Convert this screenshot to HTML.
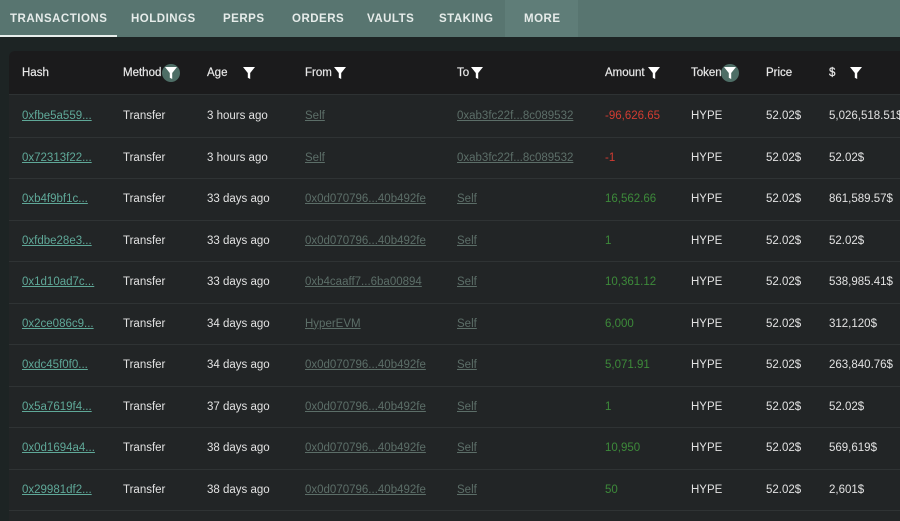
<!DOCTYPE html>
<html><head><style>
*{margin:0;padding:0;box-sizing:border-box}
body{width:900px;height:514px;overflow:hidden;background:#1d2424;font-family:"Liberation Sans",sans-serif;position:relative}
.tabs{position:absolute;left:0;top:0;width:900px;height:37px;background:#587570}
.tab{position:absolute;top:13px;font-size:11.5px;font-weight:bold;letter-spacing:0.5px;color:#e6ecea}
.more{position:absolute;left:505px;top:0;width:73px;height:37px;background:#5f7d78}
.ul{position:absolute;left:0;top:35px;width:117px;height:2px;background:#e8eeec}
.table{position:absolute;left:9px;top:51px;width:900px;height:470px;background:#222526;border-radius:6px 0 0 0;overflow:hidden}
.head{position:absolute;left:0;top:0;width:100%;height:44px;background:#1b1b1c;border-bottom:1px solid #2e3233}
.c{position:absolute;font-size:11.5px;color:#e2e2e2;white-space:nowrap}
.h{font-weight:600;color:#e8e8e8;-webkit-text-stroke:0.2px #e8e8e8;font-weight:normal}
.row{position:absolute;left:0;width:100%;height:41.5px;border-bottom:1px solid #2f3334}
a{color:#5fa898;text-decoration:underline}
.l{color:#5c6e68;text-decoration:underline}
.g{color:#3d8a3a}.r{color:#d23c32}
.f{position:absolute;width:18px;height:18px;border-radius:50%}
.f svg{position:absolute;left:3px;top:3px}
</style></head><body>
<div class="tabs">
<div class="more"></div>
<div class="tab" style="left:10px">TRANSACTIONS</div>
<div class="tab" style="left:131px">HOLDINGS</div>
<div class="tab" style="left:223px">PERPS</div>
<div class="tab" style="left:292px">ORDERS</div>
<div class="tab" style="left:367px">VAULTS</div>
<div class="tab" style="left:439px">STAKING</div>
<div class="tab" style="left:524px">MORE</div>
<div class="ul"></div>
</div>
<div class="table">
<div class="head">
<div class="c h" style="left:13px;top:16px">Hash</div>
<div class="c h" style="left:114px;top:16px">Method</div>
<div class="f" style="left:153px;top:13px;background:#4e6e66"><svg width="12" height="12" viewBox="0 0 10 10"><path d="M0 0H10L6 5V10L4 9V5Z" fill="#fff"/></svg></div>
<div class="c h" style="left:198px;top:16px">Age</div>
<div class="f" style="left:231px;top:13px"><svg width="12" height="12" viewBox="0 0 10 10"><path d="M0 0H10L6 5V10L4 9V5Z" fill="#fff"/></svg></div>
<div class="c h" style="left:296px;top:16px">From</div>
<div class="f" style="left:322px;top:13px"><svg width="12" height="12" viewBox="0 0 10 10"><path d="M0 0H10L6 5V10L4 9V5Z" fill="#fff"/></svg></div>
<div class="c h" style="left:448px;top:16px">To</div>
<div class="f" style="left:459px;top:13px"><svg width="12" height="12" viewBox="0 0 10 10"><path d="M0 0H10L6 5V10L4 9V5Z" fill="#fff"/></svg></div>
<div class="c h" style="left:596px;top:16px">Amount</div>
<div class="f" style="left:636px;top:13px"><svg width="12" height="12" viewBox="0 0 10 10"><path d="M0 0H10L6 5V10L4 9V5Z" fill="#fff"/></svg></div>
<div class="c h" style="left:682px;top:16px">Token</div>
<div class="f" style="left:712px;top:13px;background:#4e6e66"><svg width="12" height="12" viewBox="0 0 10 10"><path d="M0 0H10L6 5V10L4 9V5Z" fill="#fff"/></svg></div>
<div class="c h" style="left:757px;top:16px">Price</div>
<div class="c h" style="left:820px;top:16px">$</div>
<div class="f" style="left:838px;top:13px"><svg width="12" height="12" viewBox="0 0 10 10"><path d="M0 0H10L6 5V10L4 9V5Z" fill="#fff"/></svg></div>
</div>
</div>
<div style="position:absolute;left:9px;top:96px;width:900px">
<div class="row" style="top:0"><div class="c" style="left:13px;top:14px"><a>0xfbe5a559...</a></div><div class="c" style="left:114px;top:14px">Transfer</div><div class="c" style="left:198px;top:14px">3 hours ago</div><div class="c l" style="left:296px;top:14px">Self</div><div class="c l" style="left:448px;top:14px">0xab3fc22f...8c089532</div><div class="c r" style="left:596px;top:14px">-96,626.65</div><div class="c" style="left:682px;top:14px">HYPE</div><div class="c" style="left:757px;top:14px">52.02$</div><div class="c" style="left:820px;top:14px">5,026,518.51$</div></div>
<div class="row" style="top:41.5px"><div class="c" style="left:13px;top:14px"><a>0x72313f22...</a></div><div class="c" style="left:114px;top:14px">Transfer</div><div class="c" style="left:198px;top:14px">3 hours ago</div><div class="c l" style="left:296px;top:14px">Self</div><div class="c l" style="left:448px;top:14px">0xab3fc22f...8c089532</div><div class="c r" style="left:596px;top:14px">-1</div><div class="c" style="left:682px;top:14px">HYPE</div><div class="c" style="left:757px;top:14px">52.02$</div><div class="c" style="left:820px;top:14px">52.02$</div></div>
<div class="row" style="top:83px"><div class="c" style="left:13px;top:14px"><a>0xb4f9bf1c...</a></div><div class="c" style="left:114px;top:14px">Transfer</div><div class="c" style="left:198px;top:14px">33 days ago</div><div class="c l" style="left:296px;top:14px">0x0d070796...40b492fe</div><div class="c l" style="left:448px;top:14px">Self</div><div class="c g" style="left:596px;top:14px">16,562.66</div><div class="c" style="left:682px;top:14px">HYPE</div><div class="c" style="left:757px;top:14px">52.02$</div><div class="c" style="left:820px;top:14px">861,589.57$</div></div>
<div class="row" style="top:124.5px"><div class="c" style="left:13px;top:14px"><a>0xfdbe28e3...</a></div><div class="c" style="left:114px;top:14px">Transfer</div><div class="c" style="left:198px;top:14px">33 days ago</div><div class="c l" style="left:296px;top:14px">0x0d070796...40b492fe</div><div class="c l" style="left:448px;top:14px">Self</div><div class="c g" style="left:596px;top:14px">1</div><div class="c" style="left:682px;top:14px">HYPE</div><div class="c" style="left:757px;top:14px">52.02$</div><div class="c" style="left:820px;top:14px">52.02$</div></div>
<div class="row" style="top:166px"><div class="c" style="left:13px;top:14px"><a>0x1d10ad7c...</a></div><div class="c" style="left:114px;top:14px">Transfer</div><div class="c" style="left:198px;top:14px">33 days ago</div><div class="c l" style="left:296px;top:14px">0xb4caaff7...6ba00894</div><div class="c l" style="left:448px;top:14px">Self</div><div class="c g" style="left:596px;top:14px">10,361.12</div><div class="c" style="left:682px;top:14px">HYPE</div><div class="c" style="left:757px;top:14px">52.02$</div><div class="c" style="left:820px;top:14px">538,985.41$</div></div>
<div class="row" style="top:207.5px"><div class="c" style="left:13px;top:14px"><a>0x2ce086c9...</a></div><div class="c" style="left:114px;top:14px">Transfer</div><div class="c" style="left:198px;top:14px">34 days ago</div><div class="c l" style="left:296px;top:14px">HyperEVM</div><div class="c l" style="left:448px;top:14px">Self</div><div class="c g" style="left:596px;top:14px">6,000</div><div class="c" style="left:682px;top:14px">HYPE</div><div class="c" style="left:757px;top:14px">52.02$</div><div class="c" style="left:820px;top:14px">312,120$</div></div>
<div class="row" style="top:249px"><div class="c" style="left:13px;top:14px"><a>0xdc45f0f0...</a></div><div class="c" style="left:114px;top:14px">Transfer</div><div class="c" style="left:198px;top:14px">34 days ago</div><div class="c l" style="left:296px;top:14px">0x0d070796...40b492fe</div><div class="c l" style="left:448px;top:14px">Self</div><div class="c g" style="left:596px;top:14px">5,071.91</div><div class="c" style="left:682px;top:14px">HYPE</div><div class="c" style="left:757px;top:14px">52.02$</div><div class="c" style="left:820px;top:14px">263,840.76$</div></div>
<div class="row" style="top:290.5px"><div class="c" style="left:13px;top:14px"><a>0x5a7619f4...</a></div><div class="c" style="left:114px;top:14px">Transfer</div><div class="c" style="left:198px;top:14px">37 days ago</div><div class="c l" style="left:296px;top:14px">0x0d070796...40b492fe</div><div class="c l" style="left:448px;top:14px">Self</div><div class="c g" style="left:596px;top:14px">1</div><div class="c" style="left:682px;top:14px">HYPE</div><div class="c" style="left:757px;top:14px">52.02$</div><div class="c" style="left:820px;top:14px">52.02$</div></div>
<div class="row" style="top:332px"><div class="c" style="left:13px;top:14px"><a>0x0d1694a4...</a></div><div class="c" style="left:114px;top:14px">Transfer</div><div class="c" style="left:198px;top:14px">38 days ago</div><div class="c l" style="left:296px;top:14px">0x0d070796...40b492fe</div><div class="c l" style="left:448px;top:14px">Self</div><div class="c g" style="left:596px;top:14px">10,950</div><div class="c" style="left:682px;top:14px">HYPE</div><div class="c" style="left:757px;top:14px">52.02$</div><div class="c" style="left:820px;top:14px">569,619$</div></div>
<div class="row" style="top:373.5px"><div class="c" style="left:13px;top:14px"><a>0x29981df2...</a></div><div class="c" style="left:114px;top:14px">Transfer</div><div class="c" style="left:198px;top:14px">38 days ago</div><div class="c l" style="left:296px;top:14px">0x0d070796...40b492fe</div><div class="c l" style="left:448px;top:14px">Self</div><div class="c g" style="left:596px;top:14px">50</div><div class="c" style="left:682px;top:14px">HYPE</div><div class="c" style="left:757px;top:14px">52.02$</div><div class="c" style="left:820px;top:14px">2,601$</div></div>
</div>
</body></html>
